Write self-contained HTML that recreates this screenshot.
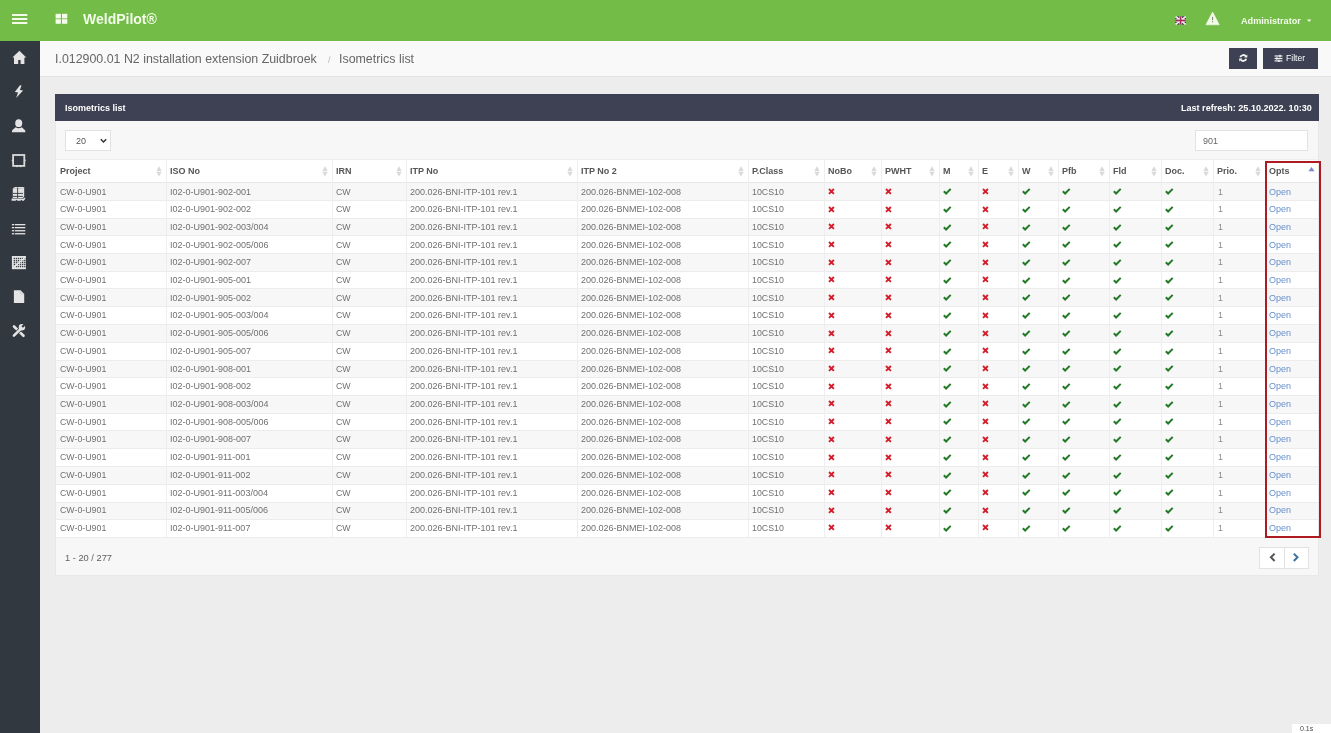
<!DOCTYPE html>
<html><head><meta charset="utf-8">
<style>
*{box-sizing:border-box;margin:0;padding:0}
html,body{width:1331px;height:733px;overflow:hidden}
body{background:#ededed;font-family:"Liberation Sans",sans-serif;position:relative}
.a{position:absolute;white-space:nowrap;line-height:1}
.top{position:absolute;left:0;top:0;width:1331px;height:41px;background:#72bc47}
.side{position:absolute;left:0;top:41px;width:40px;height:692px;background:#323840}
.crumb{position:absolute;left:40px;top:41px;width:1291px;height:36px;background:#f9f9f9;border-bottom:1px solid #e2e2e2}
.btn{position:absolute;top:48px;height:21px;background:#3e4153}
.panel{position:absolute;left:55px;top:94px;width:1264px;height:482px;background:#f7f7f7;border:1px solid #e8e8e8;border-top:0}
.ph{position:absolute;left:55px;top:94px;width:1264px;height:27px;background:#3e4153}
.sel{position:absolute;left:65px;top:130px;width:46px;height:21px;background:#fff;border:1px solid #e2e2e2}
.search{position:absolute;left:1195px;top:130px;width:113px;height:21px;background:#fff;border:1px solid #e2e2e2}
.hl{position:absolute;left:56px;width:1262px;height:1px;background:#ececec}
.vl{position:absolute;top:159px;width:1px;height:378px;background:#eeeeee}
.th{position:absolute;top:167px;font-size:9px;font-weight:bold;color:#555;line-height:1;white-space:nowrap}
.td{position:absolute;font-size:8.8px;color:#707070;line-height:1;white-space:nowrap}
.lk{color:#6690cc}
.redbox{position:absolute;left:1265px;top:161px;width:56px;height:377px;border:2px solid #ad1a21}
.pag{position:absolute;left:1259px;top:547px;width:50px;height:22px;background:#fff;border:1px solid #e2e2e2}
.badge{position:absolute;left:1292px;top:724px;width:39px;height:9px;background:#fff}
</style></head><body><div id="w" style="position:absolute;left:0;top:0;width:1331px;height:733px;will-change:transform">
<div class="top"></div>
<div class="side"></div>
<svg style="position:absolute;left:0;top:0" width="80" height="40" viewBox="0 0 80 40">
<g fill="#f4fbe9">
<rect x="12" y="14" width="15.3" height="2"/><rect x="12" y="18" width="15.3" height="2"/><rect x="12" y="22" width="15.3" height="2"/>
<rect x="55.6" y="13.8" width="5.3" height="4.6"/><rect x="62" y="13.8" width="5.3" height="4.6"/>
<rect x="55.6" y="19.2" width="5.3" height="4.6"/><rect x="62" y="19.2" width="5.3" height="4.6"/>
</g></svg>
<svg style="position:absolute;left:1170px;top:8px" width="60" height="24" viewBox="1170 8 60 24">
<rect x="1175.5" y="16.5" width="10.3" height="8" fill="#2a2340"/>
<path d="M1175.5 16.5L1185.8 24.5M1185.8 16.5L1175.5 24.5" stroke="#f3e8ee" stroke-width="1.8"/>
<path d="M1180.65 16.5V24.5M1175.5 20.5H1185.8" stroke="#f3e8ee" stroke-width="2.6"/>
<path d="M1180.65 16.5V24.5M1175.5 20.5H1185.8" stroke="#a82858" stroke-width="1.5"/>
<path d="M1212.6 12L1219.3 24.8H1205.9Z" fill="#f4fbe9" stroke="#f4fbe9" stroke-width="0.6" stroke-linejoin="round"/>
<rect x="1212" y="16.8" width="1.1" height="3.4" fill="#7d8a72"/>
<rect x="1212" y="21.2" width="1.1" height="1.1" fill="#7d8a72"/>
</svg>
<svg style="position:absolute;left:1300px;top:10px" width="20" height="20" viewBox="1300 10 20 20"><path d="M1306.9 19.4H1311.4L1309.15 21.9Z" fill="#f4fbe9"/></svg>
<svg style="position:absolute;left:0;top:0" width="40" height="345" viewBox="0 0 40 345">
<g fill="#e4e4e4">
<path d="M19.4 50.8L26.3 57.6H24.4V64.1H20.6V60.1H18.2V64.1H14V57.6H12.4Z"/>
<path d="M20 85.2L21.5 85.5L19.9 90.1L23.1 90.6L16.1 97.9L18.1 92.4L14.8 92.1Z"/>
<ellipse cx="18.7" cy="123.2" rx="3.5" ry="3.9"/>
<path d="M15.6 127.2Q18.7 129.2 21.8 127.2L25.3 130.6V132.2H12V130.6Z"/>
</g>
<rect x="13.1" y="155" width="11.2" height="10.9" fill="none" stroke="#dadada" stroke-width="1.8"/>
<g fill="#dadada"><circle cx="12.6" cy="160.4" r="0.9"/><circle cx="24.8" cy="160.4" r="0.9"/><circle cx="17" cy="166.3" r="0.9"/><circle cx="20.6" cy="166.3" r="0.9"/><circle cx="18.7" cy="154.6" r="0.7"/></g>
<g fill="#e2e2e2">
<path d="M12.8 188.2H22.6L24.2 187V196.6L23 198H12.8Z"/>
<path d="M15 187H24.2L22.6 188.2H12.8Z"/>
<path d="M11.6 198.6H23.8L25.2 197.2V198.8L23.8 200.7H22.3L21.5 199.8L20.5 200.7H17.5L16.6 199.8L15.7 200.7H11.6Z"/>
</g>
<g stroke="#323840" stroke-width="0.9">
<path d="M17.6 187.5V198M12.8 193.4H23M12.8 196.4H23"/>
</g>
<g fill="#e4e4e4">
<rect x="11.9" y="224" width="2.3" height="1.3"/><rect x="14.9" y="224" width="10.4" height="1.3"/>
<rect x="11.9" y="227" width="2.3" height="1.3"/><rect x="14.9" y="227" width="10.4" height="1.3"/>
<rect x="11.9" y="230.1" width="2.3" height="1.3"/><rect x="14.9" y="230.1" width="10.4" height="1.3"/>
<rect x="11.9" y="233.1" width="2.3" height="1.3"/><rect x="14.9" y="233.1" width="10.4" height="1.3"/>
<rect x="11.9" y="256" width="14" height="13.2"/>
</g>
<g fill="#3a3f46">
<rect x="13.700000000000001" y="257.79999999999995" width="1.3" height="1.3"/><rect x="13.700000000000001" y="259.9" width="1.3" height="1.3"/><rect x="13.700000000000001" y="261.79999999999995" width="1.3" height="1.3"/><rect x="13.700000000000001" y="263.79999999999995" width="1.3" height="1.3"/><rect x="13.700000000000001" y="265.9" width="1.3" height="1.3"/><rect x="15.799999999999999" y="257.79999999999995" width="1.3" height="1.3"/><rect x="15.799999999999999" y="259.9" width="1.3" height="1.3"/><rect x="15.799999999999999" y="261.79999999999995" width="1.3" height="1.3"/><rect x="15.799999999999999" y="263.79999999999995" width="1.3" height="1.3"/><rect x="15.799999999999999" y="265.9" width="1.3" height="1.3"/><rect x="17.799999999999997" y="257.79999999999995" width="1.3" height="1.3"/><rect x="17.799999999999997" y="259.9" width="1.3" height="1.3"/><rect x="17.799999999999997" y="261.79999999999995" width="1.3" height="1.3"/><rect x="17.799999999999997" y="263.79999999999995" width="1.3" height="1.3"/><rect x="17.799999999999997" y="265.9" width="1.3" height="1.3"/><rect x="19.9" y="257.79999999999995" width="1.3" height="1.3"/><rect x="19.9" y="259.9" width="1.3" height="1.3"/><rect x="19.9" y="261.79999999999995" width="1.3" height="1.3"/><rect x="19.9" y="263.79999999999995" width="1.3" height="1.3"/><rect x="19.9" y="265.9" width="1.3" height="1.3"/><rect x="22.0" y="257.79999999999995" width="1.3" height="1.3"/><rect x="22.0" y="259.9" width="1.3" height="1.3"/><rect x="22.0" y="261.79999999999995" width="1.3" height="1.3"/><rect x="22.0" y="263.79999999999995" width="1.3" height="1.3"/><rect x="22.0" y="265.9" width="1.3" height="1.3"/><rect x="24.099999999999998" y="257.79999999999995" width="1.3" height="1.3"/><rect x="24.099999999999998" y="259.9" width="1.3" height="1.3"/><rect x="24.099999999999998" y="261.79999999999995" width="1.3" height="1.3"/><rect x="24.099999999999998" y="263.79999999999995" width="1.3" height="1.3"/><rect x="24.099999999999998" y="265.9" width="1.3" height="1.3"/>
</g>
<path d="M13 268L25.5 257" stroke="#eaeaea" stroke-width="1.4"/>
<path d="M13.9 290.2H20.6L24.2 293.9V303H13.9Z" fill="#e4e4e4"/>
<path d="M20.6 290.2V293.9H24.2" fill="none" stroke="#b8b8b8" stroke-width="0.5"/>
<g stroke-linecap="round">
<path d="M14 326.5L23.5 335.8" stroke="#e4e4e4" stroke-width="2.6"/>
<path d="M13.9 335.7L21 328.6" stroke="#323840" stroke-width="4"/>
<path d="M13.9 335.7L21 328.6" stroke="#e4e4e4" stroke-width="2.6"/>
</g>
<circle cx="21.9" cy="327.3" r="3.2" fill="#e4e4e4"/>
<path d="M22.2 327L25.5 323.7" stroke="#323840" stroke-width="2.2"/>
</svg>
<div class="crumb"></div>
<span class="a" style="left:55px;top:53px;font-size:12.4px;color:#666">I.012900.01 N2 installation extension Zuidbroek</span>
<span class="a" style="left:328px;top:56px;font-size:9px;color:#bbb">/</span>
<span class="a" style="left:339px;top:53px;font-size:12.4px;color:#666">Isometrics list</span>
<div class="btn" style="left:1229px;width:28px"></div>
<div class="btn" style="left:1263px;width:55px"></div>
<svg style="position:absolute;left:1229px;top:48px" width="90" height="21" viewBox="1229 48 90 21">
<g fill="none" stroke="#f2f2f2" stroke-width="1.8">
<path d="M1246 56.6A3.1 3.1 0 0 0 1240.3 57.3"/>
<path d="M1240.5 59.4A3.1 3.1 0 0 0 1246.2 58.7"/>
</g>
<path d="M1247.3 54.6V57.6H1244.3Z" fill="#f2f2f2"/>
<path d="M1239.2 61.5V58.5H1242.2Z" fill="#f2f2f2"/>
<g fill="#f0f0f0">
<rect x="1274.6" y="55.4" width="7.8" height="1.2"/><rect x="1274.6" y="57.9" width="7.8" height="1.2"/><rect x="1274.6" y="60.3" width="7.8" height="1.2"/>
<rect x="1279.2" y="54.8" width="1.5" height="2.4"/><rect x="1276.1" y="57.3" width="1.5" height="2.4"/><rect x="1278.2" y="59.7" width="1.5" height="2.3"/>
</g>
</svg>
<span class="a" style="left:1286px;top:54px;font-size:8.6px;color:#fff">Filter</span>
<div class="panel"></div>
<div class="ph"></div>
<span class="a" style="left:65px;top:103.5px;font-size:9px;font-weight:bold;color:#fff">Isometrics list</span>
<span class="a" style="left:1181px;top:103.5px;font-size:9.06px;font-weight:bold;color:#fff">Last refresh: 25.10.2022. 10:30</span>
<div class="sel"></div>
<span class="a" style="left:76px;top:137px;font-size:9px;color:#555">20</span>
<svg style="position:absolute;left:95px;top:133px" width="15" height="15" viewBox="95 133 15 15"><path d="M100.8 139.3L103.5 142L106.2 139.3" fill="none" stroke="#333" stroke-width="1.5"/></svg>
<div class="search"></div>
<span class="a" style="left:1203px;top:137px;font-size:9px;color:#666">901</span>
<div style="position:absolute;left:56px;top:159px;width:1262px;height:23px;background:#fff;border-top:1px solid #eeeeee"></div>
<div style="position:absolute;left:56px;top:182.0px;width:1262px;height:17.75px;background:#f7f7f7"></div>
<div style="position:absolute;left:56px;top:199.75px;width:1262px;height:17.75px;background:#fff"></div>
<div style="position:absolute;left:56px;top:217.5px;width:1262px;height:17.75px;background:#f7f7f7"></div>
<div style="position:absolute;left:56px;top:235.25px;width:1262px;height:17.75px;background:#fff"></div>
<div style="position:absolute;left:56px;top:253.0px;width:1262px;height:17.75px;background:#f7f7f7"></div>
<div style="position:absolute;left:56px;top:270.75px;width:1262px;height:17.75px;background:#fff"></div>
<div style="position:absolute;left:56px;top:288.5px;width:1262px;height:17.75px;background:#f7f7f7"></div>
<div style="position:absolute;left:56px;top:306.25px;width:1262px;height:17.75px;background:#fff"></div>
<div style="position:absolute;left:56px;top:324.0px;width:1262px;height:17.75px;background:#f7f7f7"></div>
<div style="position:absolute;left:56px;top:341.75px;width:1262px;height:17.75px;background:#fff"></div>
<div style="position:absolute;left:56px;top:359.5px;width:1262px;height:17.75px;background:#f7f7f7"></div>
<div style="position:absolute;left:56px;top:377.25px;width:1262px;height:17.75px;background:#fff"></div>
<div style="position:absolute;left:56px;top:395.0px;width:1262px;height:17.75px;background:#f7f7f7"></div>
<div style="position:absolute;left:56px;top:412.75px;width:1262px;height:17.75px;background:#fff"></div>
<div style="position:absolute;left:56px;top:430.5px;width:1262px;height:17.75px;background:#f7f7f7"></div>
<div style="position:absolute;left:56px;top:448.25px;width:1262px;height:17.75px;background:#fff"></div>
<div style="position:absolute;left:56px;top:466.0px;width:1262px;height:17.75px;background:#f7f7f7"></div>
<div style="position:absolute;left:56px;top:483.75px;width:1262px;height:17.75px;background:#fff"></div>
<div style="position:absolute;left:56px;top:501.5px;width:1262px;height:17.75px;background:#f7f7f7"></div>
<div style="position:absolute;left:56px;top:519.25px;width:1262px;height:17.75px;background:#fff"></div>
<div class="hl" style="top:182px;background:#e6e6e6"></div>
<div class="hl" style="top:200px"></div>
<div class="hl" style="top:218px"></div>
<div class="hl" style="top:235px"></div>
<div class="hl" style="top:253px"></div>
<div class="hl" style="top:271px"></div>
<div class="hl" style="top:288px"></div>
<div class="hl" style="top:306px"></div>
<div class="hl" style="top:324px"></div>
<div class="hl" style="top:342px"></div>
<div class="hl" style="top:360px"></div>
<div class="hl" style="top:377px"></div>
<div class="hl" style="top:395px"></div>
<div class="hl" style="top:413px"></div>
<div class="hl" style="top:430px"></div>
<div class="hl" style="top:448px"></div>
<div class="hl" style="top:466px"></div>
<div class="hl" style="top:484px"></div>
<div class="hl" style="top:502px"></div>
<div class="hl" style="top:519px"></div>
<div class="hl" style="top:537px"></div>
<div class="vl" style="left:166px"></div>
<div class="vl" style="left:332px"></div>
<div class="vl" style="left:406px"></div>
<div class="vl" style="left:577px"></div>
<div class="vl" style="left:748px"></div>
<div class="vl" style="left:824px"></div>
<div class="vl" style="left:881px"></div>
<div class="vl" style="left:939px"></div>
<div class="vl" style="left:978px"></div>
<div class="vl" style="left:1018px"></div>
<div class="vl" style="left:1058px"></div>
<div class="vl" style="left:1109px"></div>
<div class="vl" style="left:1161px"></div>
<div class="vl" style="left:1213px"></div>
<div class="vl" style="left:1265px"></div>
<span class="th" style="left:60px">Project</span>
<svg width="6" height="11" viewBox="0 0 6 11" style="position:absolute;left:155.6px;top:165.5px"><path d="M3 0.3L5.7 5.1H0.3Z" fill="#d9d9d9"/><path d="M3 10.6L5.7 5.8H0.3Z" fill="#d9d9d9"/></svg>
<span class="th" style="left:170px">ISO No</span>
<svg width="6" height="11" viewBox="0 0 6 11" style="position:absolute;left:321.6px;top:165.5px"><path d="M3 0.3L5.7 5.1H0.3Z" fill="#d9d9d9"/><path d="M3 10.6L5.7 5.8H0.3Z" fill="#d9d9d9"/></svg>
<span class="th" style="left:336px">IRN</span>
<svg width="6" height="11" viewBox="0 0 6 11" style="position:absolute;left:395.6px;top:165.5px"><path d="M3 0.3L5.7 5.1H0.3Z" fill="#d9d9d9"/><path d="M3 10.6L5.7 5.8H0.3Z" fill="#d9d9d9"/></svg>
<span class="th" style="left:410px">ITP No</span>
<svg width="6" height="11" viewBox="0 0 6 11" style="position:absolute;left:566.6px;top:165.5px"><path d="M3 0.3L5.7 5.1H0.3Z" fill="#d9d9d9"/><path d="M3 10.6L5.7 5.8H0.3Z" fill="#d9d9d9"/></svg>
<span class="th" style="left:581px">ITP No 2</span>
<svg width="6" height="11" viewBox="0 0 6 11" style="position:absolute;left:737.6px;top:165.5px"><path d="M3 0.3L5.7 5.1H0.3Z" fill="#d9d9d9"/><path d="M3 10.6L5.7 5.8H0.3Z" fill="#d9d9d9"/></svg>
<span class="th" style="left:752px">P.Class</span>
<svg width="6" height="11" viewBox="0 0 6 11" style="position:absolute;left:813.6px;top:165.5px"><path d="M3 0.3L5.7 5.1H0.3Z" fill="#d9d9d9"/><path d="M3 10.6L5.7 5.8H0.3Z" fill="#d9d9d9"/></svg>
<span class="th" style="left:828px">NoBo</span>
<svg width="6" height="11" viewBox="0 0 6 11" style="position:absolute;left:870.6px;top:165.5px"><path d="M3 0.3L5.7 5.1H0.3Z" fill="#d9d9d9"/><path d="M3 10.6L5.7 5.8H0.3Z" fill="#d9d9d9"/></svg>
<span class="th" style="left:885px">PWHT</span>
<svg width="6" height="11" viewBox="0 0 6 11" style="position:absolute;left:928.6px;top:165.5px"><path d="M3 0.3L5.7 5.1H0.3Z" fill="#d9d9d9"/><path d="M3 10.6L5.7 5.8H0.3Z" fill="#d9d9d9"/></svg>
<span class="th" style="left:943px">M</span>
<svg width="6" height="11" viewBox="0 0 6 11" style="position:absolute;left:967.6px;top:165.5px"><path d="M3 0.3L5.7 5.1H0.3Z" fill="#d9d9d9"/><path d="M3 10.6L5.7 5.8H0.3Z" fill="#d9d9d9"/></svg>
<span class="th" style="left:982px">E</span>
<svg width="6" height="11" viewBox="0 0 6 11" style="position:absolute;left:1007.6px;top:165.5px"><path d="M3 0.3L5.7 5.1H0.3Z" fill="#d9d9d9"/><path d="M3 10.6L5.7 5.8H0.3Z" fill="#d9d9d9"/></svg>
<span class="th" style="left:1022px">W</span>
<svg width="6" height="11" viewBox="0 0 6 11" style="position:absolute;left:1047.6px;top:165.5px"><path d="M3 0.3L5.7 5.1H0.3Z" fill="#d9d9d9"/><path d="M3 10.6L5.7 5.8H0.3Z" fill="#d9d9d9"/></svg>
<span class="th" style="left:1062px">Pfb</span>
<svg width="6" height="11" viewBox="0 0 6 11" style="position:absolute;left:1098.6px;top:165.5px"><path d="M3 0.3L5.7 5.1H0.3Z" fill="#d9d9d9"/><path d="M3 10.6L5.7 5.8H0.3Z" fill="#d9d9d9"/></svg>
<span class="th" style="left:1113px">Fld</span>
<svg width="6" height="11" viewBox="0 0 6 11" style="position:absolute;left:1150.6px;top:165.5px"><path d="M3 0.3L5.7 5.1H0.3Z" fill="#d9d9d9"/><path d="M3 10.6L5.7 5.8H0.3Z" fill="#d9d9d9"/></svg>
<span class="th" style="left:1165px">Doc.</span>
<svg width="6" height="11" viewBox="0 0 6 11" style="position:absolute;left:1202.6px;top:165.5px"><path d="M3 0.3L5.7 5.1H0.3Z" fill="#d9d9d9"/><path d="M3 10.6L5.7 5.8H0.3Z" fill="#d9d9d9"/></svg>
<span class="th" style="left:1217px">Prio.</span>
<svg width="6" height="11" viewBox="0 0 6 11" style="position:absolute;left:1254.6px;top:165.5px"><path d="M3 0.3L5.7 5.1H0.3Z" fill="#d9d9d9"/><path d="M3 10.6L5.7 5.8H0.3Z" fill="#d9d9d9"/></svg>
<span class="th" style="left:1269px">Opts</span>
<svg width="7" height="5" viewBox="0 0 7 5" style="position:absolute;left:1307.5px;top:166.5px"><path d="M3.5 0L6.6 4.3H0.4Z" fill="#7f89c9"/></svg>
<span class="td" style="left:60px;top:187.50px;font-size:8.8px">CW-0-U901</span>
<span class="td" style="left:170px;top:187.50px;font-size:9.0px">I02-0-U901-902-001</span>
<span class="td" style="left:336px;top:187.50px;font-size:8.8px">CW</span>
<span class="td" style="left:410px;top:187.50px;font-size:9.0px">200.026-BNI-ITP-101 rev.1</span>
<span class="td" style="left:581px;top:187.50px;font-size:9.0px">200.026-BNMEI-102-008</span>
<span class="td" style="left:752px;top:187.50px;font-size:8.8px">10CS10</span>
<svg width="7" height="7" viewBox="0 0 7 7" style="position:absolute;left:827.5px;top:187.90px"><path d="M1 1L5.9 5.9M5.9 1L1 5.9" stroke="#d41f2c" stroke-width="1.9"/></svg>
<svg width="7" height="7" viewBox="0 0 7 7" style="position:absolute;left:884.5px;top:187.90px"><path d="M1 1L5.9 5.9M5.9 1L1 5.9" stroke="#d41f2c" stroke-width="1.9"/></svg>
<svg width="9" height="7" viewBox="0 0 9 7" style="position:absolute;left:943px;top:188.20px"><path d="M0.8 3.3L3.1 5.5L7.7 0.9" stroke="#227a26" stroke-width="2" fill="none"/></svg>
<svg width="7" height="7" viewBox="0 0 7 7" style="position:absolute;left:981.5px;top:187.90px"><path d="M1 1L5.9 5.9M5.9 1L1 5.9" stroke="#d41f2c" stroke-width="1.9"/></svg>
<svg width="9" height="7" viewBox="0 0 9 7" style="position:absolute;left:1022px;top:188.20px"><path d="M0.8 3.3L3.1 5.5L7.7 0.9" stroke="#227a26" stroke-width="2" fill="none"/></svg>
<svg width="9" height="7" viewBox="0 0 9 7" style="position:absolute;left:1062px;top:188.20px"><path d="M0.8 3.3L3.1 5.5L7.7 0.9" stroke="#227a26" stroke-width="2" fill="none"/></svg>
<svg width="9" height="7" viewBox="0 0 9 7" style="position:absolute;left:1113px;top:188.20px"><path d="M0.8 3.3L3.1 5.5L7.7 0.9" stroke="#227a26" stroke-width="2" fill="none"/></svg>
<svg width="9" height="7" viewBox="0 0 9 7" style="position:absolute;left:1165px;top:188.20px"><path d="M0.8 3.3L3.1 5.5L7.7 0.9" stroke="#227a26" stroke-width="2" fill="none"/></svg>
<span class="td" style="left:1218px;top:187.50px;color:#8a8a8a">1</span>
<span class="td lk" style="left:1269px;top:187.50px;font-size:9px">Open</span>
<span class="td" style="left:60px;top:205.21px;font-size:8.8px">CW-0-U901</span>
<span class="td" style="left:170px;top:205.21px;font-size:9.0px">I02-0-U901-902-002</span>
<span class="td" style="left:336px;top:205.21px;font-size:8.8px">CW</span>
<span class="td" style="left:410px;top:205.21px;font-size:9.0px">200.026-BNI-ITP-101 rev.1</span>
<span class="td" style="left:581px;top:205.21px;font-size:9.0px">200.026-BNMEI-102-008</span>
<span class="td" style="left:752px;top:205.21px;font-size:8.8px">10CS10</span>
<svg width="7" height="7" viewBox="0 0 7 7" style="position:absolute;left:827.5px;top:205.61px"><path d="M1 1L5.9 5.9M5.9 1L1 5.9" stroke="#d41f2c" stroke-width="1.9"/></svg>
<svg width="7" height="7" viewBox="0 0 7 7" style="position:absolute;left:884.5px;top:205.61px"><path d="M1 1L5.9 5.9M5.9 1L1 5.9" stroke="#d41f2c" stroke-width="1.9"/></svg>
<svg width="9" height="7" viewBox="0 0 9 7" style="position:absolute;left:943px;top:205.91px"><path d="M0.8 3.3L3.1 5.5L7.7 0.9" stroke="#227a26" stroke-width="2" fill="none"/></svg>
<svg width="7" height="7" viewBox="0 0 7 7" style="position:absolute;left:981.5px;top:205.61px"><path d="M1 1L5.9 5.9M5.9 1L1 5.9" stroke="#d41f2c" stroke-width="1.9"/></svg>
<svg width="9" height="7" viewBox="0 0 9 7" style="position:absolute;left:1022px;top:205.91px"><path d="M0.8 3.3L3.1 5.5L7.7 0.9" stroke="#227a26" stroke-width="2" fill="none"/></svg>
<svg width="9" height="7" viewBox="0 0 9 7" style="position:absolute;left:1062px;top:205.91px"><path d="M0.8 3.3L3.1 5.5L7.7 0.9" stroke="#227a26" stroke-width="2" fill="none"/></svg>
<svg width="9" height="7" viewBox="0 0 9 7" style="position:absolute;left:1113px;top:205.91px"><path d="M0.8 3.3L3.1 5.5L7.7 0.9" stroke="#227a26" stroke-width="2" fill="none"/></svg>
<svg width="9" height="7" viewBox="0 0 9 7" style="position:absolute;left:1165px;top:205.91px"><path d="M0.8 3.3L3.1 5.5L7.7 0.9" stroke="#227a26" stroke-width="2" fill="none"/></svg>
<span class="td" style="left:1218px;top:205.21px;color:#8a8a8a">1</span>
<span class="td lk" style="left:1269px;top:205.21px;font-size:9px">Open</span>
<span class="td" style="left:60px;top:222.92px;font-size:8.8px">CW-0-U901</span>
<span class="td" style="left:170px;top:222.92px;font-size:9.0px">I02-0-U901-902-003/004</span>
<span class="td" style="left:336px;top:222.92px;font-size:8.8px">CW</span>
<span class="td" style="left:410px;top:222.92px;font-size:9.0px">200.026-BNI-ITP-101 rev.1</span>
<span class="td" style="left:581px;top:222.92px;font-size:9.0px">200.026-BNMEI-102-008</span>
<span class="td" style="left:752px;top:222.92px;font-size:8.8px">10CS10</span>
<svg width="7" height="7" viewBox="0 0 7 7" style="position:absolute;left:827.5px;top:223.32px"><path d="M1 1L5.9 5.9M5.9 1L1 5.9" stroke="#d41f2c" stroke-width="1.9"/></svg>
<svg width="7" height="7" viewBox="0 0 7 7" style="position:absolute;left:884.5px;top:223.32px"><path d="M1 1L5.9 5.9M5.9 1L1 5.9" stroke="#d41f2c" stroke-width="1.9"/></svg>
<svg width="9" height="7" viewBox="0 0 9 7" style="position:absolute;left:943px;top:223.62px"><path d="M0.8 3.3L3.1 5.5L7.7 0.9" stroke="#227a26" stroke-width="2" fill="none"/></svg>
<svg width="7" height="7" viewBox="0 0 7 7" style="position:absolute;left:981.5px;top:223.32px"><path d="M1 1L5.9 5.9M5.9 1L1 5.9" stroke="#d41f2c" stroke-width="1.9"/></svg>
<svg width="9" height="7" viewBox="0 0 9 7" style="position:absolute;left:1022px;top:223.62px"><path d="M0.8 3.3L3.1 5.5L7.7 0.9" stroke="#227a26" stroke-width="2" fill="none"/></svg>
<svg width="9" height="7" viewBox="0 0 9 7" style="position:absolute;left:1062px;top:223.62px"><path d="M0.8 3.3L3.1 5.5L7.7 0.9" stroke="#227a26" stroke-width="2" fill="none"/></svg>
<svg width="9" height="7" viewBox="0 0 9 7" style="position:absolute;left:1113px;top:223.62px"><path d="M0.8 3.3L3.1 5.5L7.7 0.9" stroke="#227a26" stroke-width="2" fill="none"/></svg>
<svg width="9" height="7" viewBox="0 0 9 7" style="position:absolute;left:1165px;top:223.62px"><path d="M0.8 3.3L3.1 5.5L7.7 0.9" stroke="#227a26" stroke-width="2" fill="none"/></svg>
<span class="td" style="left:1218px;top:222.92px;color:#8a8a8a">1</span>
<span class="td lk" style="left:1269px;top:222.92px;font-size:9px">Open</span>
<span class="td" style="left:60px;top:240.63px;font-size:8.8px">CW-0-U901</span>
<span class="td" style="left:170px;top:240.63px;font-size:9.0px">I02-0-U901-902-005/006</span>
<span class="td" style="left:336px;top:240.63px;font-size:8.8px">CW</span>
<span class="td" style="left:410px;top:240.63px;font-size:9.0px">200.026-BNI-ITP-101 rev.1</span>
<span class="td" style="left:581px;top:240.63px;font-size:9.0px">200.026-BNMEI-102-008</span>
<span class="td" style="left:752px;top:240.63px;font-size:8.8px">10CS10</span>
<svg width="7" height="7" viewBox="0 0 7 7" style="position:absolute;left:827.5px;top:241.03px"><path d="M1 1L5.9 5.9M5.9 1L1 5.9" stroke="#d41f2c" stroke-width="1.9"/></svg>
<svg width="7" height="7" viewBox="0 0 7 7" style="position:absolute;left:884.5px;top:241.03px"><path d="M1 1L5.9 5.9M5.9 1L1 5.9" stroke="#d41f2c" stroke-width="1.9"/></svg>
<svg width="9" height="7" viewBox="0 0 9 7" style="position:absolute;left:943px;top:241.33px"><path d="M0.8 3.3L3.1 5.5L7.7 0.9" stroke="#227a26" stroke-width="2" fill="none"/></svg>
<svg width="7" height="7" viewBox="0 0 7 7" style="position:absolute;left:981.5px;top:241.03px"><path d="M1 1L5.9 5.9M5.9 1L1 5.9" stroke="#d41f2c" stroke-width="1.9"/></svg>
<svg width="9" height="7" viewBox="0 0 9 7" style="position:absolute;left:1022px;top:241.33px"><path d="M0.8 3.3L3.1 5.5L7.7 0.9" stroke="#227a26" stroke-width="2" fill="none"/></svg>
<svg width="9" height="7" viewBox="0 0 9 7" style="position:absolute;left:1062px;top:241.33px"><path d="M0.8 3.3L3.1 5.5L7.7 0.9" stroke="#227a26" stroke-width="2" fill="none"/></svg>
<svg width="9" height="7" viewBox="0 0 9 7" style="position:absolute;left:1113px;top:241.33px"><path d="M0.8 3.3L3.1 5.5L7.7 0.9" stroke="#227a26" stroke-width="2" fill="none"/></svg>
<svg width="9" height="7" viewBox="0 0 9 7" style="position:absolute;left:1165px;top:241.33px"><path d="M0.8 3.3L3.1 5.5L7.7 0.9" stroke="#227a26" stroke-width="2" fill="none"/></svg>
<span class="td" style="left:1218px;top:240.63px;color:#8a8a8a">1</span>
<span class="td lk" style="left:1269px;top:240.63px;font-size:9px">Open</span>
<span class="td" style="left:60px;top:258.34px;font-size:8.8px">CW-0-U901</span>
<span class="td" style="left:170px;top:258.34px;font-size:9.0px">I02-0-U901-902-007</span>
<span class="td" style="left:336px;top:258.34px;font-size:8.8px">CW</span>
<span class="td" style="left:410px;top:258.34px;font-size:9.0px">200.026-BNI-ITP-101 rev.1</span>
<span class="td" style="left:581px;top:258.34px;font-size:9.0px">200.026-BNMEI-102-008</span>
<span class="td" style="left:752px;top:258.34px;font-size:8.8px">10CS10</span>
<svg width="7" height="7" viewBox="0 0 7 7" style="position:absolute;left:827.5px;top:258.74px"><path d="M1 1L5.9 5.9M5.9 1L1 5.9" stroke="#d41f2c" stroke-width="1.9"/></svg>
<svg width="7" height="7" viewBox="0 0 7 7" style="position:absolute;left:884.5px;top:258.74px"><path d="M1 1L5.9 5.9M5.9 1L1 5.9" stroke="#d41f2c" stroke-width="1.9"/></svg>
<svg width="9" height="7" viewBox="0 0 9 7" style="position:absolute;left:943px;top:259.04px"><path d="M0.8 3.3L3.1 5.5L7.7 0.9" stroke="#227a26" stroke-width="2" fill="none"/></svg>
<svg width="7" height="7" viewBox="0 0 7 7" style="position:absolute;left:981.5px;top:258.74px"><path d="M1 1L5.9 5.9M5.9 1L1 5.9" stroke="#d41f2c" stroke-width="1.9"/></svg>
<svg width="9" height="7" viewBox="0 0 9 7" style="position:absolute;left:1022px;top:259.04px"><path d="M0.8 3.3L3.1 5.5L7.7 0.9" stroke="#227a26" stroke-width="2" fill="none"/></svg>
<svg width="9" height="7" viewBox="0 0 9 7" style="position:absolute;left:1062px;top:259.04px"><path d="M0.8 3.3L3.1 5.5L7.7 0.9" stroke="#227a26" stroke-width="2" fill="none"/></svg>
<svg width="9" height="7" viewBox="0 0 9 7" style="position:absolute;left:1113px;top:259.04px"><path d="M0.8 3.3L3.1 5.5L7.7 0.9" stroke="#227a26" stroke-width="2" fill="none"/></svg>
<svg width="9" height="7" viewBox="0 0 9 7" style="position:absolute;left:1165px;top:259.04px"><path d="M0.8 3.3L3.1 5.5L7.7 0.9" stroke="#227a26" stroke-width="2" fill="none"/></svg>
<span class="td" style="left:1218px;top:258.34px;color:#8a8a8a">1</span>
<span class="td lk" style="left:1269px;top:258.34px;font-size:9px">Open</span>
<span class="td" style="left:60px;top:276.05px;font-size:8.8px">CW-0-U901</span>
<span class="td" style="left:170px;top:276.05px;font-size:9.0px">I02-0-U901-905-001</span>
<span class="td" style="left:336px;top:276.05px;font-size:8.8px">CW</span>
<span class="td" style="left:410px;top:276.05px;font-size:9.0px">200.026-BNI-ITP-101 rev.1</span>
<span class="td" style="left:581px;top:276.05px;font-size:9.0px">200.026-BNMEI-102-008</span>
<span class="td" style="left:752px;top:276.05px;font-size:8.8px">10CS10</span>
<svg width="7" height="7" viewBox="0 0 7 7" style="position:absolute;left:827.5px;top:276.45px"><path d="M1 1L5.9 5.9M5.9 1L1 5.9" stroke="#d41f2c" stroke-width="1.9"/></svg>
<svg width="7" height="7" viewBox="0 0 7 7" style="position:absolute;left:884.5px;top:276.45px"><path d="M1 1L5.9 5.9M5.9 1L1 5.9" stroke="#d41f2c" stroke-width="1.9"/></svg>
<svg width="9" height="7" viewBox="0 0 9 7" style="position:absolute;left:943px;top:276.75px"><path d="M0.8 3.3L3.1 5.5L7.7 0.9" stroke="#227a26" stroke-width="2" fill="none"/></svg>
<svg width="7" height="7" viewBox="0 0 7 7" style="position:absolute;left:981.5px;top:276.45px"><path d="M1 1L5.9 5.9M5.9 1L1 5.9" stroke="#d41f2c" stroke-width="1.9"/></svg>
<svg width="9" height="7" viewBox="0 0 9 7" style="position:absolute;left:1022px;top:276.75px"><path d="M0.8 3.3L3.1 5.5L7.7 0.9" stroke="#227a26" stroke-width="2" fill="none"/></svg>
<svg width="9" height="7" viewBox="0 0 9 7" style="position:absolute;left:1062px;top:276.75px"><path d="M0.8 3.3L3.1 5.5L7.7 0.9" stroke="#227a26" stroke-width="2" fill="none"/></svg>
<svg width="9" height="7" viewBox="0 0 9 7" style="position:absolute;left:1113px;top:276.75px"><path d="M0.8 3.3L3.1 5.5L7.7 0.9" stroke="#227a26" stroke-width="2" fill="none"/></svg>
<svg width="9" height="7" viewBox="0 0 9 7" style="position:absolute;left:1165px;top:276.75px"><path d="M0.8 3.3L3.1 5.5L7.7 0.9" stroke="#227a26" stroke-width="2" fill="none"/></svg>
<span class="td" style="left:1218px;top:276.05px;color:#8a8a8a">1</span>
<span class="td lk" style="left:1269px;top:276.05px;font-size:9px">Open</span>
<span class="td" style="left:60px;top:293.76px;font-size:8.8px">CW-0-U901</span>
<span class="td" style="left:170px;top:293.76px;font-size:9.0px">I02-0-U901-905-002</span>
<span class="td" style="left:336px;top:293.76px;font-size:8.8px">CW</span>
<span class="td" style="left:410px;top:293.76px;font-size:9.0px">200.026-BNI-ITP-101 rev.1</span>
<span class="td" style="left:581px;top:293.76px;font-size:9.0px">200.026-BNMEI-102-008</span>
<span class="td" style="left:752px;top:293.76px;font-size:8.8px">10CS10</span>
<svg width="7" height="7" viewBox="0 0 7 7" style="position:absolute;left:827.5px;top:294.16px"><path d="M1 1L5.9 5.9M5.9 1L1 5.9" stroke="#d41f2c" stroke-width="1.9"/></svg>
<svg width="7" height="7" viewBox="0 0 7 7" style="position:absolute;left:884.5px;top:294.16px"><path d="M1 1L5.9 5.9M5.9 1L1 5.9" stroke="#d41f2c" stroke-width="1.9"/></svg>
<svg width="9" height="7" viewBox="0 0 9 7" style="position:absolute;left:943px;top:294.46px"><path d="M0.8 3.3L3.1 5.5L7.7 0.9" stroke="#227a26" stroke-width="2" fill="none"/></svg>
<svg width="7" height="7" viewBox="0 0 7 7" style="position:absolute;left:981.5px;top:294.16px"><path d="M1 1L5.9 5.9M5.9 1L1 5.9" stroke="#d41f2c" stroke-width="1.9"/></svg>
<svg width="9" height="7" viewBox="0 0 9 7" style="position:absolute;left:1022px;top:294.46px"><path d="M0.8 3.3L3.1 5.5L7.7 0.9" stroke="#227a26" stroke-width="2" fill="none"/></svg>
<svg width="9" height="7" viewBox="0 0 9 7" style="position:absolute;left:1062px;top:294.46px"><path d="M0.8 3.3L3.1 5.5L7.7 0.9" stroke="#227a26" stroke-width="2" fill="none"/></svg>
<svg width="9" height="7" viewBox="0 0 9 7" style="position:absolute;left:1113px;top:294.46px"><path d="M0.8 3.3L3.1 5.5L7.7 0.9" stroke="#227a26" stroke-width="2" fill="none"/></svg>
<svg width="9" height="7" viewBox="0 0 9 7" style="position:absolute;left:1165px;top:294.46px"><path d="M0.8 3.3L3.1 5.5L7.7 0.9" stroke="#227a26" stroke-width="2" fill="none"/></svg>
<span class="td" style="left:1218px;top:293.76px;color:#8a8a8a">1</span>
<span class="td lk" style="left:1269px;top:293.76px;font-size:9px">Open</span>
<span class="td" style="left:60px;top:311.47px;font-size:8.8px">CW-0-U901</span>
<span class="td" style="left:170px;top:311.47px;font-size:9.0px">I02-0-U901-905-003/004</span>
<span class="td" style="left:336px;top:311.47px;font-size:8.8px">CW</span>
<span class="td" style="left:410px;top:311.47px;font-size:9.0px">200.026-BNI-ITP-101 rev.1</span>
<span class="td" style="left:581px;top:311.47px;font-size:9.0px">200.026-BNMEI-102-008</span>
<span class="td" style="left:752px;top:311.47px;font-size:8.8px">10CS10</span>
<svg width="7" height="7" viewBox="0 0 7 7" style="position:absolute;left:827.5px;top:311.87px"><path d="M1 1L5.9 5.9M5.9 1L1 5.9" stroke="#d41f2c" stroke-width="1.9"/></svg>
<svg width="7" height="7" viewBox="0 0 7 7" style="position:absolute;left:884.5px;top:311.87px"><path d="M1 1L5.9 5.9M5.9 1L1 5.9" stroke="#d41f2c" stroke-width="1.9"/></svg>
<svg width="9" height="7" viewBox="0 0 9 7" style="position:absolute;left:943px;top:312.17px"><path d="M0.8 3.3L3.1 5.5L7.7 0.9" stroke="#227a26" stroke-width="2" fill="none"/></svg>
<svg width="7" height="7" viewBox="0 0 7 7" style="position:absolute;left:981.5px;top:311.87px"><path d="M1 1L5.9 5.9M5.9 1L1 5.9" stroke="#d41f2c" stroke-width="1.9"/></svg>
<svg width="9" height="7" viewBox="0 0 9 7" style="position:absolute;left:1022px;top:312.17px"><path d="M0.8 3.3L3.1 5.5L7.7 0.9" stroke="#227a26" stroke-width="2" fill="none"/></svg>
<svg width="9" height="7" viewBox="0 0 9 7" style="position:absolute;left:1062px;top:312.17px"><path d="M0.8 3.3L3.1 5.5L7.7 0.9" stroke="#227a26" stroke-width="2" fill="none"/></svg>
<svg width="9" height="7" viewBox="0 0 9 7" style="position:absolute;left:1113px;top:312.17px"><path d="M0.8 3.3L3.1 5.5L7.7 0.9" stroke="#227a26" stroke-width="2" fill="none"/></svg>
<svg width="9" height="7" viewBox="0 0 9 7" style="position:absolute;left:1165px;top:312.17px"><path d="M0.8 3.3L3.1 5.5L7.7 0.9" stroke="#227a26" stroke-width="2" fill="none"/></svg>
<span class="td" style="left:1218px;top:311.47px;color:#8a8a8a">1</span>
<span class="td lk" style="left:1269px;top:311.47px;font-size:9px">Open</span>
<span class="td" style="left:60px;top:329.18px;font-size:8.8px">CW-0-U901</span>
<span class="td" style="left:170px;top:329.18px;font-size:9.0px">I02-0-U901-905-005/006</span>
<span class="td" style="left:336px;top:329.18px;font-size:8.8px">CW</span>
<span class="td" style="left:410px;top:329.18px;font-size:9.0px">200.026-BNI-ITP-101 rev.1</span>
<span class="td" style="left:581px;top:329.18px;font-size:9.0px">200.026-BNMEI-102-008</span>
<span class="td" style="left:752px;top:329.18px;font-size:8.8px">10CS10</span>
<svg width="7" height="7" viewBox="0 0 7 7" style="position:absolute;left:827.5px;top:329.58px"><path d="M1 1L5.9 5.9M5.9 1L1 5.9" stroke="#d41f2c" stroke-width="1.9"/></svg>
<svg width="7" height="7" viewBox="0 0 7 7" style="position:absolute;left:884.5px;top:329.58px"><path d="M1 1L5.9 5.9M5.9 1L1 5.9" stroke="#d41f2c" stroke-width="1.9"/></svg>
<svg width="9" height="7" viewBox="0 0 9 7" style="position:absolute;left:943px;top:329.88px"><path d="M0.8 3.3L3.1 5.5L7.7 0.9" stroke="#227a26" stroke-width="2" fill="none"/></svg>
<svg width="7" height="7" viewBox="0 0 7 7" style="position:absolute;left:981.5px;top:329.58px"><path d="M1 1L5.9 5.9M5.9 1L1 5.9" stroke="#d41f2c" stroke-width="1.9"/></svg>
<svg width="9" height="7" viewBox="0 0 9 7" style="position:absolute;left:1022px;top:329.88px"><path d="M0.8 3.3L3.1 5.5L7.7 0.9" stroke="#227a26" stroke-width="2" fill="none"/></svg>
<svg width="9" height="7" viewBox="0 0 9 7" style="position:absolute;left:1062px;top:329.88px"><path d="M0.8 3.3L3.1 5.5L7.7 0.9" stroke="#227a26" stroke-width="2" fill="none"/></svg>
<svg width="9" height="7" viewBox="0 0 9 7" style="position:absolute;left:1113px;top:329.88px"><path d="M0.8 3.3L3.1 5.5L7.7 0.9" stroke="#227a26" stroke-width="2" fill="none"/></svg>
<svg width="9" height="7" viewBox="0 0 9 7" style="position:absolute;left:1165px;top:329.88px"><path d="M0.8 3.3L3.1 5.5L7.7 0.9" stroke="#227a26" stroke-width="2" fill="none"/></svg>
<span class="td" style="left:1218px;top:329.18px;color:#8a8a8a">1</span>
<span class="td lk" style="left:1269px;top:329.18px;font-size:9px">Open</span>
<span class="td" style="left:60px;top:346.89px;font-size:8.8px">CW-0-U901</span>
<span class="td" style="left:170px;top:346.89px;font-size:9.0px">I02-0-U901-905-007</span>
<span class="td" style="left:336px;top:346.89px;font-size:8.8px">CW</span>
<span class="td" style="left:410px;top:346.89px;font-size:9.0px">200.026-BNI-ITP-101 rev.1</span>
<span class="td" style="left:581px;top:346.89px;font-size:9.0px">200.026-BNMEI-102-008</span>
<span class="td" style="left:752px;top:346.89px;font-size:8.8px">10CS10</span>
<svg width="7" height="7" viewBox="0 0 7 7" style="position:absolute;left:827.5px;top:347.29px"><path d="M1 1L5.9 5.9M5.9 1L1 5.9" stroke="#d41f2c" stroke-width="1.9"/></svg>
<svg width="7" height="7" viewBox="0 0 7 7" style="position:absolute;left:884.5px;top:347.29px"><path d="M1 1L5.9 5.9M5.9 1L1 5.9" stroke="#d41f2c" stroke-width="1.9"/></svg>
<svg width="9" height="7" viewBox="0 0 9 7" style="position:absolute;left:943px;top:347.59px"><path d="M0.8 3.3L3.1 5.5L7.7 0.9" stroke="#227a26" stroke-width="2" fill="none"/></svg>
<svg width="7" height="7" viewBox="0 0 7 7" style="position:absolute;left:981.5px;top:347.29px"><path d="M1 1L5.9 5.9M5.9 1L1 5.9" stroke="#d41f2c" stroke-width="1.9"/></svg>
<svg width="9" height="7" viewBox="0 0 9 7" style="position:absolute;left:1022px;top:347.59px"><path d="M0.8 3.3L3.1 5.5L7.7 0.9" stroke="#227a26" stroke-width="2" fill="none"/></svg>
<svg width="9" height="7" viewBox="0 0 9 7" style="position:absolute;left:1062px;top:347.59px"><path d="M0.8 3.3L3.1 5.5L7.7 0.9" stroke="#227a26" stroke-width="2" fill="none"/></svg>
<svg width="9" height="7" viewBox="0 0 9 7" style="position:absolute;left:1113px;top:347.59px"><path d="M0.8 3.3L3.1 5.5L7.7 0.9" stroke="#227a26" stroke-width="2" fill="none"/></svg>
<svg width="9" height="7" viewBox="0 0 9 7" style="position:absolute;left:1165px;top:347.59px"><path d="M0.8 3.3L3.1 5.5L7.7 0.9" stroke="#227a26" stroke-width="2" fill="none"/></svg>
<span class="td" style="left:1218px;top:346.89px;color:#8a8a8a">1</span>
<span class="td lk" style="left:1269px;top:346.89px;font-size:9px">Open</span>
<span class="td" style="left:60px;top:364.60px;font-size:8.8px">CW-0-U901</span>
<span class="td" style="left:170px;top:364.60px;font-size:9.0px">I02-0-U901-908-001</span>
<span class="td" style="left:336px;top:364.60px;font-size:8.8px">CW</span>
<span class="td" style="left:410px;top:364.60px;font-size:9.0px">200.026-BNI-ITP-101 rev.1</span>
<span class="td" style="left:581px;top:364.60px;font-size:9.0px">200.026-BNMEI-102-008</span>
<span class="td" style="left:752px;top:364.60px;font-size:8.8px">10CS10</span>
<svg width="7" height="7" viewBox="0 0 7 7" style="position:absolute;left:827.5px;top:365.00px"><path d="M1 1L5.9 5.9M5.9 1L1 5.9" stroke="#d41f2c" stroke-width="1.9"/></svg>
<svg width="7" height="7" viewBox="0 0 7 7" style="position:absolute;left:884.5px;top:365.00px"><path d="M1 1L5.9 5.9M5.9 1L1 5.9" stroke="#d41f2c" stroke-width="1.9"/></svg>
<svg width="9" height="7" viewBox="0 0 9 7" style="position:absolute;left:943px;top:365.30px"><path d="M0.8 3.3L3.1 5.5L7.7 0.9" stroke="#227a26" stroke-width="2" fill="none"/></svg>
<svg width="7" height="7" viewBox="0 0 7 7" style="position:absolute;left:981.5px;top:365.00px"><path d="M1 1L5.9 5.9M5.9 1L1 5.9" stroke="#d41f2c" stroke-width="1.9"/></svg>
<svg width="9" height="7" viewBox="0 0 9 7" style="position:absolute;left:1022px;top:365.30px"><path d="M0.8 3.3L3.1 5.5L7.7 0.9" stroke="#227a26" stroke-width="2" fill="none"/></svg>
<svg width="9" height="7" viewBox="0 0 9 7" style="position:absolute;left:1062px;top:365.30px"><path d="M0.8 3.3L3.1 5.5L7.7 0.9" stroke="#227a26" stroke-width="2" fill="none"/></svg>
<svg width="9" height="7" viewBox="0 0 9 7" style="position:absolute;left:1113px;top:365.30px"><path d="M0.8 3.3L3.1 5.5L7.7 0.9" stroke="#227a26" stroke-width="2" fill="none"/></svg>
<svg width="9" height="7" viewBox="0 0 9 7" style="position:absolute;left:1165px;top:365.30px"><path d="M0.8 3.3L3.1 5.5L7.7 0.9" stroke="#227a26" stroke-width="2" fill="none"/></svg>
<span class="td" style="left:1218px;top:364.60px;color:#8a8a8a">1</span>
<span class="td lk" style="left:1269px;top:364.60px;font-size:9px">Open</span>
<span class="td" style="left:60px;top:382.31px;font-size:8.8px">CW-0-U901</span>
<span class="td" style="left:170px;top:382.31px;font-size:9.0px">I02-0-U901-908-002</span>
<span class="td" style="left:336px;top:382.31px;font-size:8.8px">CW</span>
<span class="td" style="left:410px;top:382.31px;font-size:9.0px">200.026-BNI-ITP-101 rev.1</span>
<span class="td" style="left:581px;top:382.31px;font-size:9.0px">200.026-BNMEI-102-008</span>
<span class="td" style="left:752px;top:382.31px;font-size:8.8px">10CS10</span>
<svg width="7" height="7" viewBox="0 0 7 7" style="position:absolute;left:827.5px;top:382.71px"><path d="M1 1L5.9 5.9M5.9 1L1 5.9" stroke="#d41f2c" stroke-width="1.9"/></svg>
<svg width="7" height="7" viewBox="0 0 7 7" style="position:absolute;left:884.5px;top:382.71px"><path d="M1 1L5.9 5.9M5.9 1L1 5.9" stroke="#d41f2c" stroke-width="1.9"/></svg>
<svg width="9" height="7" viewBox="0 0 9 7" style="position:absolute;left:943px;top:383.01px"><path d="M0.8 3.3L3.1 5.5L7.7 0.9" stroke="#227a26" stroke-width="2" fill="none"/></svg>
<svg width="7" height="7" viewBox="0 0 7 7" style="position:absolute;left:981.5px;top:382.71px"><path d="M1 1L5.9 5.9M5.9 1L1 5.9" stroke="#d41f2c" stroke-width="1.9"/></svg>
<svg width="9" height="7" viewBox="0 0 9 7" style="position:absolute;left:1022px;top:383.01px"><path d="M0.8 3.3L3.1 5.5L7.7 0.9" stroke="#227a26" stroke-width="2" fill="none"/></svg>
<svg width="9" height="7" viewBox="0 0 9 7" style="position:absolute;left:1062px;top:383.01px"><path d="M0.8 3.3L3.1 5.5L7.7 0.9" stroke="#227a26" stroke-width="2" fill="none"/></svg>
<svg width="9" height="7" viewBox="0 0 9 7" style="position:absolute;left:1113px;top:383.01px"><path d="M0.8 3.3L3.1 5.5L7.7 0.9" stroke="#227a26" stroke-width="2" fill="none"/></svg>
<svg width="9" height="7" viewBox="0 0 9 7" style="position:absolute;left:1165px;top:383.01px"><path d="M0.8 3.3L3.1 5.5L7.7 0.9" stroke="#227a26" stroke-width="2" fill="none"/></svg>
<span class="td" style="left:1218px;top:382.31px;color:#8a8a8a">1</span>
<span class="td lk" style="left:1269px;top:382.31px;font-size:9px">Open</span>
<span class="td" style="left:60px;top:400.02px;font-size:8.8px">CW-0-U901</span>
<span class="td" style="left:170px;top:400.02px;font-size:9.0px">I02-0-U901-908-003/004</span>
<span class="td" style="left:336px;top:400.02px;font-size:8.8px">CW</span>
<span class="td" style="left:410px;top:400.02px;font-size:9.0px">200.026-BNI-ITP-101 rev.1</span>
<span class="td" style="left:581px;top:400.02px;font-size:9.0px">200.026-BNMEI-102-008</span>
<span class="td" style="left:752px;top:400.02px;font-size:8.8px">10CS10</span>
<svg width="7" height="7" viewBox="0 0 7 7" style="position:absolute;left:827.5px;top:400.42px"><path d="M1 1L5.9 5.9M5.9 1L1 5.9" stroke="#d41f2c" stroke-width="1.9"/></svg>
<svg width="7" height="7" viewBox="0 0 7 7" style="position:absolute;left:884.5px;top:400.42px"><path d="M1 1L5.9 5.9M5.9 1L1 5.9" stroke="#d41f2c" stroke-width="1.9"/></svg>
<svg width="9" height="7" viewBox="0 0 9 7" style="position:absolute;left:943px;top:400.72px"><path d="M0.8 3.3L3.1 5.5L7.7 0.9" stroke="#227a26" stroke-width="2" fill="none"/></svg>
<svg width="7" height="7" viewBox="0 0 7 7" style="position:absolute;left:981.5px;top:400.42px"><path d="M1 1L5.9 5.9M5.9 1L1 5.9" stroke="#d41f2c" stroke-width="1.9"/></svg>
<svg width="9" height="7" viewBox="0 0 9 7" style="position:absolute;left:1022px;top:400.72px"><path d="M0.8 3.3L3.1 5.5L7.7 0.9" stroke="#227a26" stroke-width="2" fill="none"/></svg>
<svg width="9" height="7" viewBox="0 0 9 7" style="position:absolute;left:1062px;top:400.72px"><path d="M0.8 3.3L3.1 5.5L7.7 0.9" stroke="#227a26" stroke-width="2" fill="none"/></svg>
<svg width="9" height="7" viewBox="0 0 9 7" style="position:absolute;left:1113px;top:400.72px"><path d="M0.8 3.3L3.1 5.5L7.7 0.9" stroke="#227a26" stroke-width="2" fill="none"/></svg>
<svg width="9" height="7" viewBox="0 0 9 7" style="position:absolute;left:1165px;top:400.72px"><path d="M0.8 3.3L3.1 5.5L7.7 0.9" stroke="#227a26" stroke-width="2" fill="none"/></svg>
<span class="td" style="left:1218px;top:400.02px;color:#8a8a8a">1</span>
<span class="td lk" style="left:1269px;top:400.02px;font-size:9px">Open</span>
<span class="td" style="left:60px;top:417.73px;font-size:8.8px">CW-0-U901</span>
<span class="td" style="left:170px;top:417.73px;font-size:9.0px">I02-0-U901-908-005/006</span>
<span class="td" style="left:336px;top:417.73px;font-size:8.8px">CW</span>
<span class="td" style="left:410px;top:417.73px;font-size:9.0px">200.026-BNI-ITP-101 rev.1</span>
<span class="td" style="left:581px;top:417.73px;font-size:9.0px">200.026-BNMEI-102-008</span>
<span class="td" style="left:752px;top:417.73px;font-size:8.8px">10CS10</span>
<svg width="7" height="7" viewBox="0 0 7 7" style="position:absolute;left:827.5px;top:418.13px"><path d="M1 1L5.9 5.9M5.9 1L1 5.9" stroke="#d41f2c" stroke-width="1.9"/></svg>
<svg width="7" height="7" viewBox="0 0 7 7" style="position:absolute;left:884.5px;top:418.13px"><path d="M1 1L5.9 5.9M5.9 1L1 5.9" stroke="#d41f2c" stroke-width="1.9"/></svg>
<svg width="9" height="7" viewBox="0 0 9 7" style="position:absolute;left:943px;top:418.43px"><path d="M0.8 3.3L3.1 5.5L7.7 0.9" stroke="#227a26" stroke-width="2" fill="none"/></svg>
<svg width="7" height="7" viewBox="0 0 7 7" style="position:absolute;left:981.5px;top:418.13px"><path d="M1 1L5.9 5.9M5.9 1L1 5.9" stroke="#d41f2c" stroke-width="1.9"/></svg>
<svg width="9" height="7" viewBox="0 0 9 7" style="position:absolute;left:1022px;top:418.43px"><path d="M0.8 3.3L3.1 5.5L7.7 0.9" stroke="#227a26" stroke-width="2" fill="none"/></svg>
<svg width="9" height="7" viewBox="0 0 9 7" style="position:absolute;left:1062px;top:418.43px"><path d="M0.8 3.3L3.1 5.5L7.7 0.9" stroke="#227a26" stroke-width="2" fill="none"/></svg>
<svg width="9" height="7" viewBox="0 0 9 7" style="position:absolute;left:1113px;top:418.43px"><path d="M0.8 3.3L3.1 5.5L7.7 0.9" stroke="#227a26" stroke-width="2" fill="none"/></svg>
<svg width="9" height="7" viewBox="0 0 9 7" style="position:absolute;left:1165px;top:418.43px"><path d="M0.8 3.3L3.1 5.5L7.7 0.9" stroke="#227a26" stroke-width="2" fill="none"/></svg>
<span class="td" style="left:1218px;top:417.73px;color:#8a8a8a">1</span>
<span class="td lk" style="left:1269px;top:417.73px;font-size:9px">Open</span>
<span class="td" style="left:60px;top:435.44px;font-size:8.8px">CW-0-U901</span>
<span class="td" style="left:170px;top:435.44px;font-size:9.0px">I02-0-U901-908-007</span>
<span class="td" style="left:336px;top:435.44px;font-size:8.8px">CW</span>
<span class="td" style="left:410px;top:435.44px;font-size:9.0px">200.026-BNI-ITP-101 rev.1</span>
<span class="td" style="left:581px;top:435.44px;font-size:9.0px">200.026-BNMEI-102-008</span>
<span class="td" style="left:752px;top:435.44px;font-size:8.8px">10CS10</span>
<svg width="7" height="7" viewBox="0 0 7 7" style="position:absolute;left:827.5px;top:435.84px"><path d="M1 1L5.9 5.9M5.9 1L1 5.9" stroke="#d41f2c" stroke-width="1.9"/></svg>
<svg width="7" height="7" viewBox="0 0 7 7" style="position:absolute;left:884.5px;top:435.84px"><path d="M1 1L5.9 5.9M5.9 1L1 5.9" stroke="#d41f2c" stroke-width="1.9"/></svg>
<svg width="9" height="7" viewBox="0 0 9 7" style="position:absolute;left:943px;top:436.14px"><path d="M0.8 3.3L3.1 5.5L7.7 0.9" stroke="#227a26" stroke-width="2" fill="none"/></svg>
<svg width="7" height="7" viewBox="0 0 7 7" style="position:absolute;left:981.5px;top:435.84px"><path d="M1 1L5.9 5.9M5.9 1L1 5.9" stroke="#d41f2c" stroke-width="1.9"/></svg>
<svg width="9" height="7" viewBox="0 0 9 7" style="position:absolute;left:1022px;top:436.14px"><path d="M0.8 3.3L3.1 5.5L7.7 0.9" stroke="#227a26" stroke-width="2" fill="none"/></svg>
<svg width="9" height="7" viewBox="0 0 9 7" style="position:absolute;left:1062px;top:436.14px"><path d="M0.8 3.3L3.1 5.5L7.7 0.9" stroke="#227a26" stroke-width="2" fill="none"/></svg>
<svg width="9" height="7" viewBox="0 0 9 7" style="position:absolute;left:1113px;top:436.14px"><path d="M0.8 3.3L3.1 5.5L7.7 0.9" stroke="#227a26" stroke-width="2" fill="none"/></svg>
<svg width="9" height="7" viewBox="0 0 9 7" style="position:absolute;left:1165px;top:436.14px"><path d="M0.8 3.3L3.1 5.5L7.7 0.9" stroke="#227a26" stroke-width="2" fill="none"/></svg>
<span class="td" style="left:1218px;top:435.44px;color:#8a8a8a">1</span>
<span class="td lk" style="left:1269px;top:435.44px;font-size:9px">Open</span>
<span class="td" style="left:60px;top:453.15px;font-size:8.8px">CW-0-U901</span>
<span class="td" style="left:170px;top:453.15px;font-size:9.0px">I02-0-U901-911-001</span>
<span class="td" style="left:336px;top:453.15px;font-size:8.8px">CW</span>
<span class="td" style="left:410px;top:453.15px;font-size:9.0px">200.026-BNI-ITP-101 rev.1</span>
<span class="td" style="left:581px;top:453.15px;font-size:9.0px">200.026-BNMEI-102-008</span>
<span class="td" style="left:752px;top:453.15px;font-size:8.8px">10CS10</span>
<svg width="7" height="7" viewBox="0 0 7 7" style="position:absolute;left:827.5px;top:453.55px"><path d="M1 1L5.9 5.9M5.9 1L1 5.9" stroke="#d41f2c" stroke-width="1.9"/></svg>
<svg width="7" height="7" viewBox="0 0 7 7" style="position:absolute;left:884.5px;top:453.55px"><path d="M1 1L5.9 5.9M5.9 1L1 5.9" stroke="#d41f2c" stroke-width="1.9"/></svg>
<svg width="9" height="7" viewBox="0 0 9 7" style="position:absolute;left:943px;top:453.85px"><path d="M0.8 3.3L3.1 5.5L7.7 0.9" stroke="#227a26" stroke-width="2" fill="none"/></svg>
<svg width="7" height="7" viewBox="0 0 7 7" style="position:absolute;left:981.5px;top:453.55px"><path d="M1 1L5.9 5.9M5.9 1L1 5.9" stroke="#d41f2c" stroke-width="1.9"/></svg>
<svg width="9" height="7" viewBox="0 0 9 7" style="position:absolute;left:1022px;top:453.85px"><path d="M0.8 3.3L3.1 5.5L7.7 0.9" stroke="#227a26" stroke-width="2" fill="none"/></svg>
<svg width="9" height="7" viewBox="0 0 9 7" style="position:absolute;left:1062px;top:453.85px"><path d="M0.8 3.3L3.1 5.5L7.7 0.9" stroke="#227a26" stroke-width="2" fill="none"/></svg>
<svg width="9" height="7" viewBox="0 0 9 7" style="position:absolute;left:1113px;top:453.85px"><path d="M0.8 3.3L3.1 5.5L7.7 0.9" stroke="#227a26" stroke-width="2" fill="none"/></svg>
<svg width="9" height="7" viewBox="0 0 9 7" style="position:absolute;left:1165px;top:453.85px"><path d="M0.8 3.3L3.1 5.5L7.7 0.9" stroke="#227a26" stroke-width="2" fill="none"/></svg>
<span class="td" style="left:1218px;top:453.15px;color:#8a8a8a">1</span>
<span class="td lk" style="left:1269px;top:453.15px;font-size:9px">Open</span>
<span class="td" style="left:60px;top:470.86px;font-size:8.8px">CW-0-U901</span>
<span class="td" style="left:170px;top:470.86px;font-size:9.0px">I02-0-U901-911-002</span>
<span class="td" style="left:336px;top:470.86px;font-size:8.8px">CW</span>
<span class="td" style="left:410px;top:470.86px;font-size:9.0px">200.026-BNI-ITP-101 rev.1</span>
<span class="td" style="left:581px;top:470.86px;font-size:9.0px">200.026-BNMEI-102-008</span>
<span class="td" style="left:752px;top:470.86px;font-size:8.8px">10CS10</span>
<svg width="7" height="7" viewBox="0 0 7 7" style="position:absolute;left:827.5px;top:471.26px"><path d="M1 1L5.9 5.9M5.9 1L1 5.9" stroke="#d41f2c" stroke-width="1.9"/></svg>
<svg width="7" height="7" viewBox="0 0 7 7" style="position:absolute;left:884.5px;top:471.26px"><path d="M1 1L5.9 5.9M5.9 1L1 5.9" stroke="#d41f2c" stroke-width="1.9"/></svg>
<svg width="9" height="7" viewBox="0 0 9 7" style="position:absolute;left:943px;top:471.56px"><path d="M0.8 3.3L3.1 5.5L7.7 0.9" stroke="#227a26" stroke-width="2" fill="none"/></svg>
<svg width="7" height="7" viewBox="0 0 7 7" style="position:absolute;left:981.5px;top:471.26px"><path d="M1 1L5.9 5.9M5.9 1L1 5.9" stroke="#d41f2c" stroke-width="1.9"/></svg>
<svg width="9" height="7" viewBox="0 0 9 7" style="position:absolute;left:1022px;top:471.56px"><path d="M0.8 3.3L3.1 5.5L7.7 0.9" stroke="#227a26" stroke-width="2" fill="none"/></svg>
<svg width="9" height="7" viewBox="0 0 9 7" style="position:absolute;left:1062px;top:471.56px"><path d="M0.8 3.3L3.1 5.5L7.7 0.9" stroke="#227a26" stroke-width="2" fill="none"/></svg>
<svg width="9" height="7" viewBox="0 0 9 7" style="position:absolute;left:1113px;top:471.56px"><path d="M0.8 3.3L3.1 5.5L7.7 0.9" stroke="#227a26" stroke-width="2" fill="none"/></svg>
<svg width="9" height="7" viewBox="0 0 9 7" style="position:absolute;left:1165px;top:471.56px"><path d="M0.8 3.3L3.1 5.5L7.7 0.9" stroke="#227a26" stroke-width="2" fill="none"/></svg>
<span class="td" style="left:1218px;top:470.86px;color:#8a8a8a">1</span>
<span class="td lk" style="left:1269px;top:470.86px;font-size:9px">Open</span>
<span class="td" style="left:60px;top:488.57px;font-size:8.8px">CW-0-U901</span>
<span class="td" style="left:170px;top:488.57px;font-size:9.0px">I02-0-U901-911-003/004</span>
<span class="td" style="left:336px;top:488.57px;font-size:8.8px">CW</span>
<span class="td" style="left:410px;top:488.57px;font-size:9.0px">200.026-BNI-ITP-101 rev.1</span>
<span class="td" style="left:581px;top:488.57px;font-size:9.0px">200.026-BNMEI-102-008</span>
<span class="td" style="left:752px;top:488.57px;font-size:8.8px">10CS10</span>
<svg width="7" height="7" viewBox="0 0 7 7" style="position:absolute;left:827.5px;top:488.97px"><path d="M1 1L5.9 5.9M5.9 1L1 5.9" stroke="#d41f2c" stroke-width="1.9"/></svg>
<svg width="7" height="7" viewBox="0 0 7 7" style="position:absolute;left:884.5px;top:488.97px"><path d="M1 1L5.9 5.9M5.9 1L1 5.9" stroke="#d41f2c" stroke-width="1.9"/></svg>
<svg width="9" height="7" viewBox="0 0 9 7" style="position:absolute;left:943px;top:489.27px"><path d="M0.8 3.3L3.1 5.5L7.7 0.9" stroke="#227a26" stroke-width="2" fill="none"/></svg>
<svg width="7" height="7" viewBox="0 0 7 7" style="position:absolute;left:981.5px;top:488.97px"><path d="M1 1L5.9 5.9M5.9 1L1 5.9" stroke="#d41f2c" stroke-width="1.9"/></svg>
<svg width="9" height="7" viewBox="0 0 9 7" style="position:absolute;left:1022px;top:489.27px"><path d="M0.8 3.3L3.1 5.5L7.7 0.9" stroke="#227a26" stroke-width="2" fill="none"/></svg>
<svg width="9" height="7" viewBox="0 0 9 7" style="position:absolute;left:1062px;top:489.27px"><path d="M0.8 3.3L3.1 5.5L7.7 0.9" stroke="#227a26" stroke-width="2" fill="none"/></svg>
<svg width="9" height="7" viewBox="0 0 9 7" style="position:absolute;left:1113px;top:489.27px"><path d="M0.8 3.3L3.1 5.5L7.7 0.9" stroke="#227a26" stroke-width="2" fill="none"/></svg>
<svg width="9" height="7" viewBox="0 0 9 7" style="position:absolute;left:1165px;top:489.27px"><path d="M0.8 3.3L3.1 5.5L7.7 0.9" stroke="#227a26" stroke-width="2" fill="none"/></svg>
<span class="td" style="left:1218px;top:488.57px;color:#8a8a8a">1</span>
<span class="td lk" style="left:1269px;top:488.57px;font-size:9px">Open</span>
<span class="td" style="left:60px;top:506.28px;font-size:8.8px">CW-0-U901</span>
<span class="td" style="left:170px;top:506.28px;font-size:9.0px">I02-0-U901-911-005/006</span>
<span class="td" style="left:336px;top:506.28px;font-size:8.8px">CW</span>
<span class="td" style="left:410px;top:506.28px;font-size:9.0px">200.026-BNI-ITP-101 rev.1</span>
<span class="td" style="left:581px;top:506.28px;font-size:9.0px">200.026-BNMEI-102-008</span>
<span class="td" style="left:752px;top:506.28px;font-size:8.8px">10CS10</span>
<svg width="7" height="7" viewBox="0 0 7 7" style="position:absolute;left:827.5px;top:506.68px"><path d="M1 1L5.9 5.9M5.9 1L1 5.9" stroke="#d41f2c" stroke-width="1.9"/></svg>
<svg width="7" height="7" viewBox="0 0 7 7" style="position:absolute;left:884.5px;top:506.68px"><path d="M1 1L5.9 5.9M5.9 1L1 5.9" stroke="#d41f2c" stroke-width="1.9"/></svg>
<svg width="9" height="7" viewBox="0 0 9 7" style="position:absolute;left:943px;top:506.98px"><path d="M0.8 3.3L3.1 5.5L7.7 0.9" stroke="#227a26" stroke-width="2" fill="none"/></svg>
<svg width="7" height="7" viewBox="0 0 7 7" style="position:absolute;left:981.5px;top:506.68px"><path d="M1 1L5.9 5.9M5.9 1L1 5.9" stroke="#d41f2c" stroke-width="1.9"/></svg>
<svg width="9" height="7" viewBox="0 0 9 7" style="position:absolute;left:1022px;top:506.98px"><path d="M0.8 3.3L3.1 5.5L7.7 0.9" stroke="#227a26" stroke-width="2" fill="none"/></svg>
<svg width="9" height="7" viewBox="0 0 9 7" style="position:absolute;left:1062px;top:506.98px"><path d="M0.8 3.3L3.1 5.5L7.7 0.9" stroke="#227a26" stroke-width="2" fill="none"/></svg>
<svg width="9" height="7" viewBox="0 0 9 7" style="position:absolute;left:1113px;top:506.98px"><path d="M0.8 3.3L3.1 5.5L7.7 0.9" stroke="#227a26" stroke-width="2" fill="none"/></svg>
<svg width="9" height="7" viewBox="0 0 9 7" style="position:absolute;left:1165px;top:506.98px"><path d="M0.8 3.3L3.1 5.5L7.7 0.9" stroke="#227a26" stroke-width="2" fill="none"/></svg>
<span class="td" style="left:1218px;top:506.28px;color:#8a8a8a">1</span>
<span class="td lk" style="left:1269px;top:506.28px;font-size:9px">Open</span>
<span class="td" style="left:60px;top:523.99px;font-size:8.8px">CW-0-U901</span>
<span class="td" style="left:170px;top:523.99px;font-size:9.0px">I02-0-U901-911-007</span>
<span class="td" style="left:336px;top:523.99px;font-size:8.8px">CW</span>
<span class="td" style="left:410px;top:523.99px;font-size:9.0px">200.026-BNI-ITP-101 rev.1</span>
<span class="td" style="left:581px;top:523.99px;font-size:9.0px">200.026-BNMEI-102-008</span>
<span class="td" style="left:752px;top:523.99px;font-size:8.8px">10CS10</span>
<svg width="7" height="7" viewBox="0 0 7 7" style="position:absolute;left:827.5px;top:524.39px"><path d="M1 1L5.9 5.9M5.9 1L1 5.9" stroke="#d41f2c" stroke-width="1.9"/></svg>
<svg width="7" height="7" viewBox="0 0 7 7" style="position:absolute;left:884.5px;top:524.39px"><path d="M1 1L5.9 5.9M5.9 1L1 5.9" stroke="#d41f2c" stroke-width="1.9"/></svg>
<svg width="9" height="7" viewBox="0 0 9 7" style="position:absolute;left:943px;top:524.69px"><path d="M0.8 3.3L3.1 5.5L7.7 0.9" stroke="#227a26" stroke-width="2" fill="none"/></svg>
<svg width="7" height="7" viewBox="0 0 7 7" style="position:absolute;left:981.5px;top:524.39px"><path d="M1 1L5.9 5.9M5.9 1L1 5.9" stroke="#d41f2c" stroke-width="1.9"/></svg>
<svg width="9" height="7" viewBox="0 0 9 7" style="position:absolute;left:1022px;top:524.69px"><path d="M0.8 3.3L3.1 5.5L7.7 0.9" stroke="#227a26" stroke-width="2" fill="none"/></svg>
<svg width="9" height="7" viewBox="0 0 9 7" style="position:absolute;left:1062px;top:524.69px"><path d="M0.8 3.3L3.1 5.5L7.7 0.9" stroke="#227a26" stroke-width="2" fill="none"/></svg>
<svg width="9" height="7" viewBox="0 0 9 7" style="position:absolute;left:1113px;top:524.69px"><path d="M0.8 3.3L3.1 5.5L7.7 0.9" stroke="#227a26" stroke-width="2" fill="none"/></svg>
<svg width="9" height="7" viewBox="0 0 9 7" style="position:absolute;left:1165px;top:524.69px"><path d="M0.8 3.3L3.1 5.5L7.7 0.9" stroke="#227a26" stroke-width="2" fill="none"/></svg>
<span class="td" style="left:1218px;top:523.99px;color:#8a8a8a">1</span>
<span class="td lk" style="left:1269px;top:523.99px;font-size:9px">Open</span>
<span class="a" style="left:65px;top:554px;font-size:9.3px;color:#606060">1 - 20 / 277</span>
<div class="pag"></div>
<svg style="position:absolute;left:1259px;top:547px" width="50" height="22" viewBox="1259 547 50 22">
<rect x="1284" y="548" width="1" height="20" fill="#e2e2e2"/>
<path d="M1274.6 553.6L1270.9 557.3L1274.6 561" fill="none" stroke="#555" stroke-width="2"/>
<path d="M1293.8 553.6L1297.5 557.3L1293.8 561" fill="none" stroke="#41709f" stroke-width="2"/>
</svg>
<div class="redbox"></div>
<div class="badge"></div>
<span class="a" style="left:1300px;top:725px;font-size:7px;color:#444">0.1s</span>
<span class="a" style="left:83px;top:12px;font-size:14px;font-weight:bold;color:#f3fbe9">WeldPilot®</span>
<span class="a" style="left:1241px;top:17px;font-size:9.15px;font-weight:bold;color:#f3fbe9">Administrator</span>
</div></body></html>
